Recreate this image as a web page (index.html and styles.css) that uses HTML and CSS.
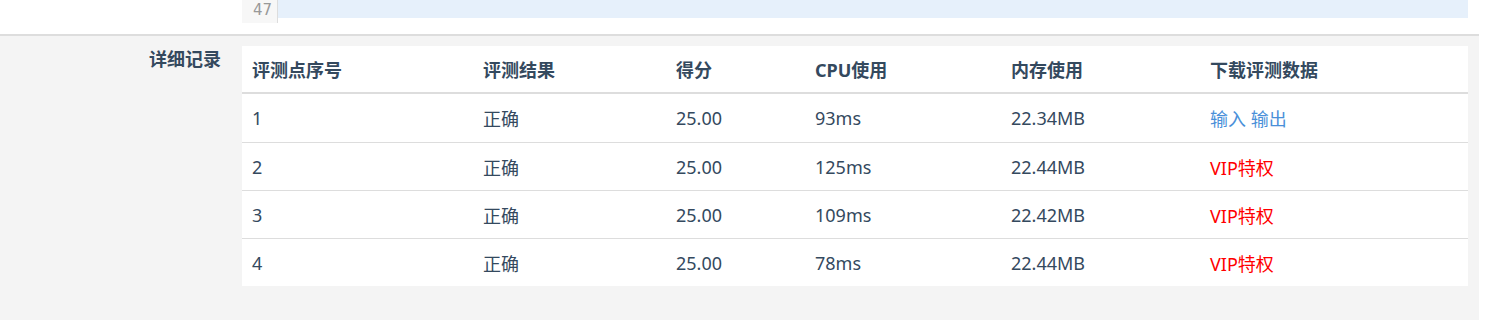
FILE: index.html
```html
<!DOCTYPE html>
<html lang="zh">
<head>
<meta charset="utf-8">
<link rel="stylesheet" href="styles.css">
</head>
<body>
<div class="page">
  <div class="top">
    <div class="code">
      <div class="gutter">47</div>
      <div class="line"></div>
    </div>
  </div>
  <div class="detail">
    <div class="label">详细记录</div>
    <table class="records">
      <colgroup>
        <col style="width:231px"><col style="width:193px"><col style="width:139px"><col style="width:196px"><col style="width:199px"><col>
      </colgroup>
      <thead>
        <tr><th>评测点序号</th><th>评测结果</th><th>得分</th><th>CPU使用</th><th>内存使用</th><th>下载评测数据</th></tr>
      </thead>
      <tbody>
        <tr><td>1</td><td>正确</td><td>25.00</td><td>93ms</td><td>22.34MB</td><td><a class="dl">输入</a> <a class="dl">输出</a></td></tr>
        <tr><td>2</td><td>正确</td><td>25.00</td><td>125ms</td><td>22.44MB</td><td><span class="vip">VIP特权</span></td></tr>
        <tr><td>3</td><td>正确</td><td>25.00</td><td>109ms</td><td>22.42MB</td><td><span class="vip">VIP特权</span></td></tr>
        <tr><td>4</td><td>正确</td><td>25.00</td><td>78ms</td><td>22.44MB</td><td><span class="vip">VIP特权</span></td></tr>
      </tbody>
    </table>
  </div>
</div>
</body>
</html>
```
FILE: styles.css
```css
html, body {
  margin: 0;
  padding: 0;
  background: #fff;
}
body {
  font-family: "Noto Sans", "Noto Sans CJK SC", sans-serif;
  color: #34495e;
  font-size: 18px;
}
.page {
  width: 1479px;
}
.top {
  padding-left: 242px;
  background: #fff;
  border-bottom: 2px solid #dddddd;
  box-sizing: border-box;
  height: 36px;
}
.code {
  display: flex;
  width: 1226px;
  align-items: flex-start;
}
.gutter {
  height: 23px;
  box-sizing: border-box;
  background: #f7f7f7;
  border-right: 1px solid #dddddd;
  width: 36px;
  color: #999;
  font-family: "DejaVu Sans", sans-serif;
  font-size: 15px;
  text-align: right;
  padding-right: 5px;
  line-height: 20px;
}
.line {
  flex: 1;
  height: 18px;
  background: #e6f0fb;
}
.detail {
  background: #f4f4f4;
  display: flex;
  padding: 10px 11px 34px 0;
  height: 284px;
  box-sizing: border-box;
}
.label {
  width: 221px;
  margin-right: 21px;
  text-align: right;
  font-weight: bold;
  font-size: 18px;
  line-height: 26px;
  color: #34495e;
}
.records {
  flex: 1;
  border-collapse: collapse;
  background: #fff;
  table-layout: fixed;
  height: 240px;
  align-self: flex-start;
}
.records th, .records td {
  text-align: left;
  padding: 0 10px;
  font-size: 18px;
  white-space: nowrap;
}
.records th {
  height: 46px;
  font-weight: bold;
  border-bottom: 2px solid #dddddd;
}
.records td {
  height: 47px;
  border-top: 1px solid #dddddd;
}
.records thead + tbody tr:first-child td {
  border-top: none;
  height: 48px;
}
.dl {
  color: #4a90d9;
}
.vip {
  color: #ff0000;
}
```
